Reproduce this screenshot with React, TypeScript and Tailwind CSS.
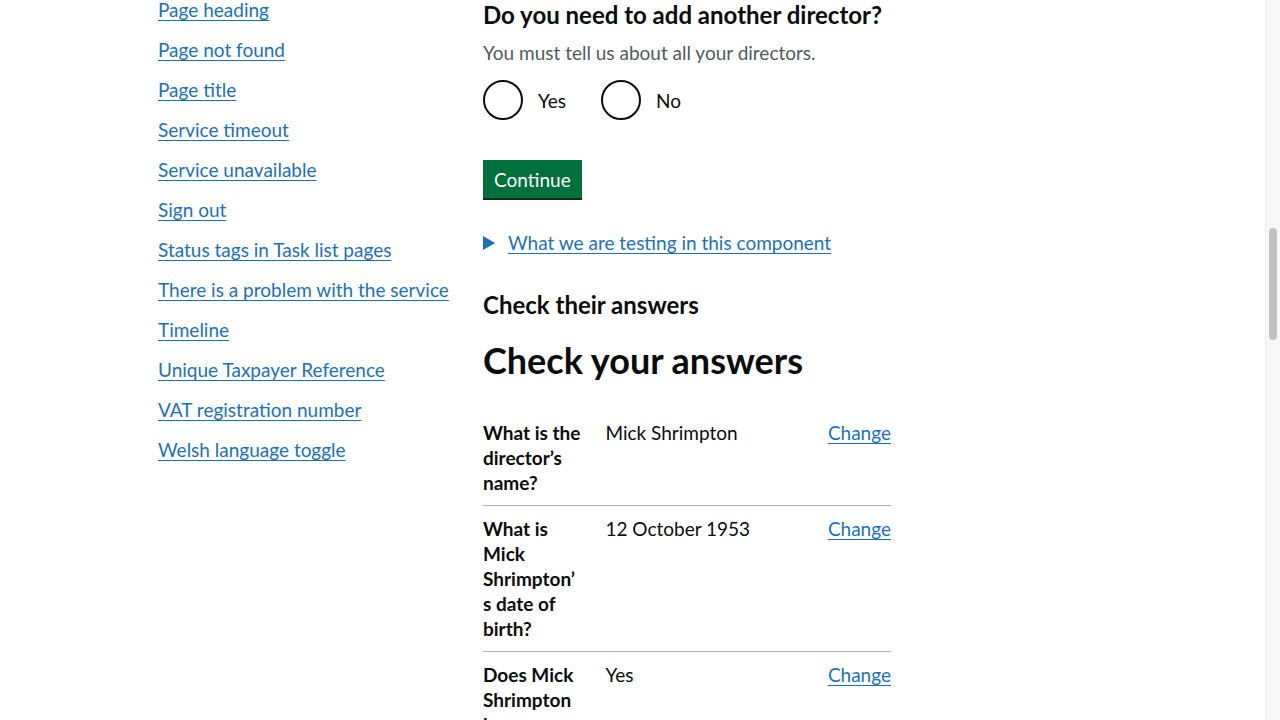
import React from 'react';

const navLinks = [
    "Page heading",
    "Page not found",
    "Page title",
    "Service timeout",
    "Service unavailable",
    "Sign out",
    "Status tags in Task list pages",
    "There is a problem with the service",
    "Timeline",
    "Unique Taxpayer Reference",
    "VAT registration number",
    "Welsh language toggle",
];

const answers = [
    { key: "What is the director\u2019s name?", value: "Mick Shrimpton" },
    { key: "What is Mick Shrimpton\u2019s date of birth?", value: "12 October 1953" },
    { key: "Does Mick Shrimpton have a service address?", value: "Yes" },
];

const linkCls = "text-[#1d70b8] underline decoration-1 underline-offset-[3px] hover:text-[#003078]";

const App: React.FC = () => {
    return (
        <div className="h-screen overflow-hidden flex bg-white text-[#0b0c0c] font-['Lato',sans-serif]">
            <div className="flex-1 flex items-start pl-[158px]">
                <nav className="w-[325px] shrink-0 -mt-[3px]">
                    <ul>
                        {navLinks.map((label) => (
                            <li key={label} className="mb-[15px] text-[19px] leading-[25px]">
                                <a href="#" className={linkCls}>{label}</a>
                            </li>
                        ))}
                    </ul>
                </nav>

                <main className="w-[408px] shrink-0">
                    <fieldset>
                        <legend className="text-[24px] leading-[30px] font-bold mb-[10px] whitespace-nowrap">Do you need to add another director?</legend>
                        <div className="text-[19px] leading-[25px] text-[#505a5f] mb-[15px]">You must tell us about all your directors.</div>
                        <div className="flex mb-[30px]">
                            {["Yes", "No"].map((opt) => (
                                <label key={opt} className="flex items-start mr-[20px] mb-[10px] cursor-pointer">
                                    <span className="w-[40px] h-[40px] rounded-full border-2 border-[#0b0c0c] bg-white shrink-0"></span>
                                    <span className="pl-[15px] pr-[15px] pt-[8px] pb-[5px] text-[19px] leading-[25px]">{opt}</span>
                                </label>
                            ))}
                        </div>
                    </fieldset>

                    <button type="button" className="block bg-[#00703c] text-white text-[19px] leading-[19px] border-2 border-transparent px-[9px] pt-[8px] pb-[7px] shadow-[0_2px_0_#002d18] mb-[32px]">Continue</button>

                    <div className="mb-[30px]">
                        <div className="flex items-center text-[19px] leading-[25px] text-[#1d70b8] mb-[5px]">
                            <svg width="13" height="14" viewBox="0 0 13 14" className="mr-[12px] shrink-0" aria-hidden="true">
                                <path d="M0 0 L12.124 7 L0 14 Z" fill="currentColor" />
                            </svg>
                            <a href="#" className={linkCls}>What we are testing in this component</a>
                        </div>
                    </div>

                    <h2 className="text-[24px] leading-[30px] font-bold pt-[5px] mb-[20px]">Check their answers</h2>
                    <h1 className="text-[36px] leading-[40px] font-bold mb-[30px]">Check your answers</h1>

                    <dl className="text-[19px] leading-[25px]">
                        {answers.map((row) => (
                            <div key={row.key} className="flex border-b border-[#b1b4b6]">
                                <dt className="w-[30%] pr-[24px] pt-[10px] pb-[10px] font-bold break-words">{row.key}</dt>
                                <dd className="w-[50%] pr-[20px] pt-[10px] pb-[10px]">{row.value}</dd>
                                <dd className="w-[20%] pt-[10px] pb-[10px] text-right">
                                    <a href="#" className={linkCls}>Change</a>
                                </dd>
                            </div>
                        ))}
                    </dl>
                </main>
            </div>

            {/* page scrollbar as it shows in the reference */}
            <div className="w-[15px] shrink-0 bg-[#f8f8f8] border-l border-[#ececec] pt-[228px] px-[3px]">
                <div className="h-[112px] rounded-full bg-[#c1c1c1]"></div>
            </div>
        </div>
    );
};

export default App;
